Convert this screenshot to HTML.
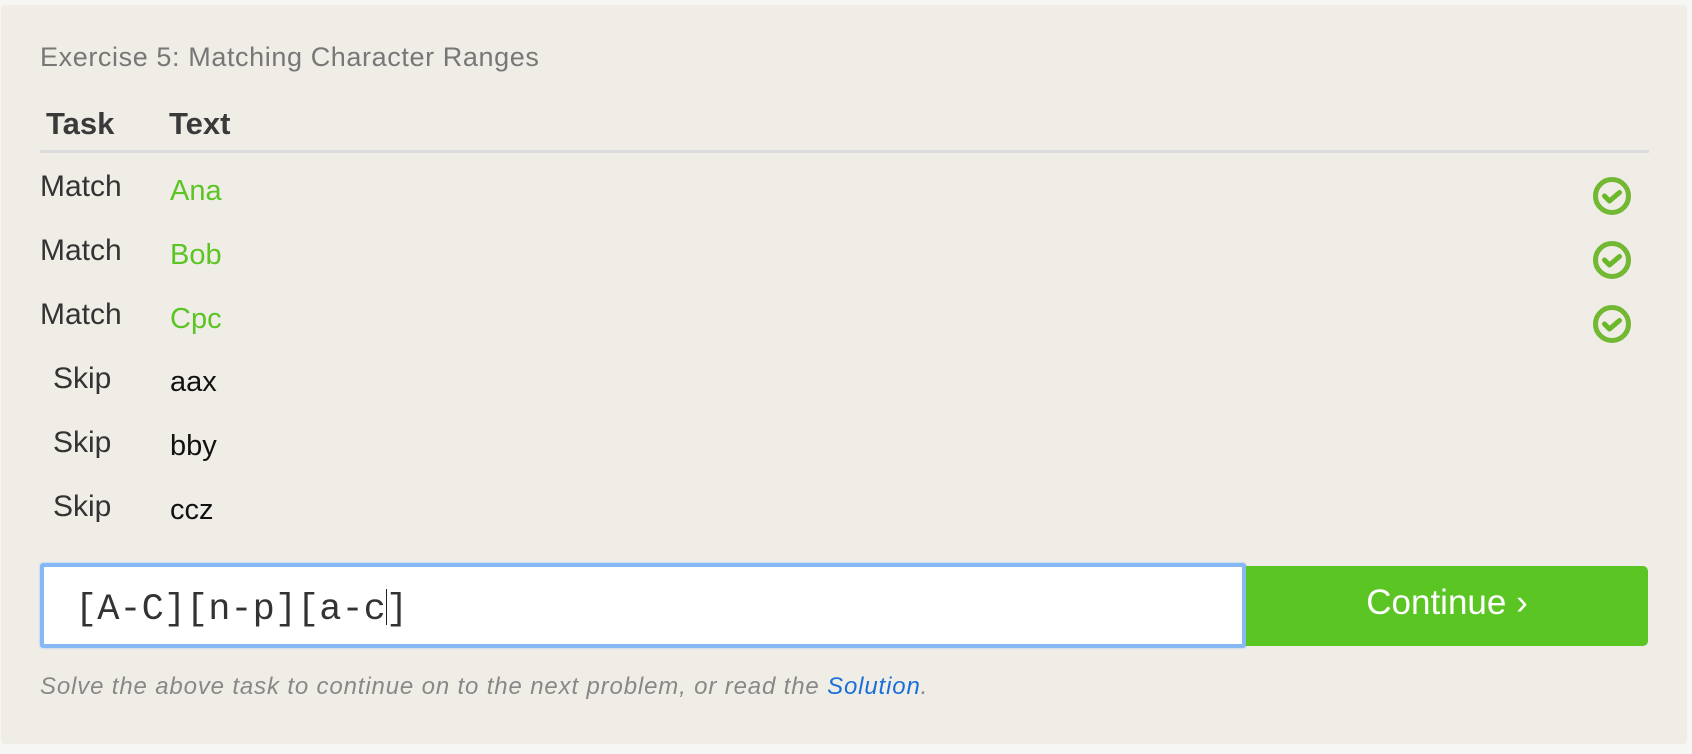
<!DOCTYPE html>
<html><head><meta charset="utf-8"><style>
html,body{margin:0;padding:0;width:1692px;height:754px;background:#f6f6f4;overflow:hidden;font-family:"Liberation Sans",sans-serif;}
.panel{position:absolute;left:1px;top:5px;width:1686px;height:739px;background:#f0ede6;border-radius:4px;}
.t{position:absolute;line-height:1;white-space:nowrap;}
.g{color:#5bc524}
.k{color:#111}
.m{color:#333}
</style></head><body>
<div class="panel"></div>
<div class="t" style="left:40px;top:44px;font-size:27px;letter-spacing:0.6px;color:#777;">Exercise 5: Matching Character Ranges</div>
<div class="t m" style="left:46px;top:108px;font-size:31px;font-weight:bold;color:#3a3a3a">Task</div>
<div class="t m" style="left:169px;top:108px;font-size:31px;font-weight:bold;color:#3a3a3a">Text</div>
<div style="position:absolute;left:40px;top:150px;width:1609px;height:3px;background:#dcdcdc"></div>

<div class="t m" style="left:40px;top:172px;font-size:30px">Match</div>
<div class="t m" style="left:40px;top:236px;font-size:30px">Match</div>
<div class="t m" style="left:40px;top:300px;font-size:30px">Match</div>
<div class="t m" style="left:53px;top:364px;font-size:30px">Skip</div>
<div class="t m" style="left:53px;top:428px;font-size:30px">Skip</div>
<div class="t m" style="left:53px;top:492px;font-size:30px">Skip</div>

<div class="t g" style="left:170px;top:177px;font-size:29px">Ana</div>
<div class="t g" style="left:170px;top:241px;font-size:29px">Bob</div>
<div class="t g" style="left:170px;top:305px;font-size:29px">Cpc</div>
<div class="t k" style="left:170px;top:368px;font-size:29px">aax</div>
<div class="t k" style="left:170px;top:432px;font-size:29px">bby</div>
<div class="t k" style="left:170px;top:496px;font-size:29px">ccz</div>

<svg style="position:absolute;left:1592px;top:176px" width="40" height="40" viewBox="0 0 40 40"><circle cx="20" cy="20" r="16.5" fill="none" stroke="#72b832" stroke-width="5"/><path d="M12.5 20l5 5 10-8.5" fill="none" stroke="#6ab72a" stroke-width="5" stroke-linecap="round" stroke-linejoin="round"/></svg>
<svg style="position:absolute;left:1592px;top:240px" width="40" height="40" viewBox="0 0 40 40"><circle cx="20" cy="20" r="16.5" fill="none" stroke="#72b832" stroke-width="5"/><path d="M12.5 20l5 5 10-8.5" fill="none" stroke="#6ab72a" stroke-width="5" stroke-linecap="round" stroke-linejoin="round"/></svg>
<svg style="position:absolute;left:1592px;top:304px" width="40" height="40" viewBox="0 0 40 40"><circle cx="20" cy="20" r="16.5" fill="none" stroke="#72b832" stroke-width="5"/><path d="M12.5 20l5 5 10-8.5" fill="none" stroke="#6ab72a" stroke-width="5" stroke-linecap="round" stroke-linejoin="round"/></svg>

<div style="position:absolute;left:40px;top:563px;width:1198px;height:77px;background:#fff;border:4px solid #86b9f3;border-radius:3px;box-shadow:0 0 2px #9cc6f5"></div>
<div class="t" style="left:75px;top:589px;font-size:37px;font-family:'Liberation Mono',monospace;color:#333">[A-C][n-p][a-c<span style="display:inline-block;width:1px;height:36px;background:#222;vertical-align:-6px;margin-right:-1px"></span>]</div>

<div style="position:absolute;left:1246px;top:566px;width:402px;height:80px;background:#5bc524;border-radius:0 5px 5px 0"></div>
<div class="t" style="left:1246px;width:402px;text-align:center;top:585px;font-size:35px;color:#fff">Continue ›</div>

<div class="t" style="left:40px;top:675px;font-size:24px;letter-spacing:0.85px;font-style:italic;color:#888">Solve the above task to continue on to the next problem, or read the <span style="color:#1a6fd8">Solution</span>.</div>
</body></html>
